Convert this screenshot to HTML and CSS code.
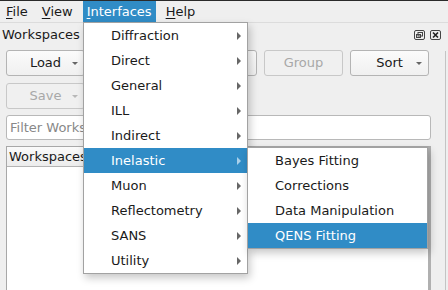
FILE: index.html
```html
<!DOCTYPE html>
<html lang="en">

<head>
    <meta charset="UTF-8">
    <title>Workspaces</title>
    <link rel="stylesheet" href="styles.css">
</head>

<body>
    <div class="window">
        <ul class="menubar">
            <li><u>F</u>ile</li>
            <li><u>V</u>iew</li>
            <li class="open"><u>I</u>nterfaces</li>
            <li><u>H</u>elp</li>
        </ul>

        <div class="dock">
            <div class="dock-title">
                <span>Workspaces</span>
                <span class="dock-btns">
                    <svg width="11" height="10" viewBox="0 0 11 10">
                        <rect x="0.5" y="0.5" width="10" height="9" rx="1.5" fill="none" stroke="#444"/>
                        <rect x="4" y="2.5" width="4.5" height="3.5" fill="none" stroke="#444"/>
                        <rect x="2.5" y="4.5" width="4" height="3" fill="none" stroke="#444"/>
                    </svg>
                    <svg width="11" height="10" viewBox="0 0 11 10">
                        <rect x="0.5" y="0.5" width="10" height="9" rx="1.5" fill="none" stroke="#444"/>
                        <path d="M3 2.5 L8 7.5 M8 2.5 L3 7.5" stroke="#222" stroke-width="1.6"/>
                    </svg>
                </span>
            </div>

            <div class="btn-row">
                <div class="btn">Load<i class="drop"></i></div>
                <!-- these two sit under the open menu -->
                <div class="btn"></div>
                <div class="btn"></div>
                <div class="btn disabled">Group</div>
                <div class="btn">Sort<i class="drop"></i></div>
            </div>
            <div class="btn-row">
                <div class="btn disabled">Save<i class="drop"></i></div>
            </div>

            <div class="filter">Filter Workspaces</div>

            <div class="tree">
                <div class="tree-head">Workspaces</div>
            </div>
        </div>
        <div class="side-line"></div>

        <!-- menus -->
        <ul class="menu main-menu">
            <li>Diffraction<i class="arrow"></i></li>
            <li>Direct<i class="arrow"></i></li>
            <li>General<i class="arrow"></i></li>
            <li>ILL<i class="arrow"></i></li>
            <li>Indirect<i class="arrow"></i></li>
            <li class="current">Inelastic<i class="arrow"></i></li>
            <li>Muon<i class="arrow"></i></li>
            <li>Reflectometry<i class="arrow"></i></li>
            <li>SANS<i class="arrow"></i></li>
            <li>Utility<i class="arrow"></i></li>
        </ul>
        <ul class="menu sub-menu">
            <li>Bayes Fitting</li>
            <li>Corrections</li>
            <li>Data Manipulation</li>
            <li class="current">QENS Fitting</li>
        </ul>
    </div>
</body>

</html>
```

FILE: styles.css
```css
html,
body,
ul,
li {
    margin: 0;
    padding: 0;
}

ul {
    list-style-type: none;
}

body {
    background: #efefef;
    font-family: "DejaVu Sans", sans-serif;
    font-size: 13px;
    color: #1a1a1a;
    overflow: hidden;
}

.window {
    position: relative;
    width: 448px;
    height: 290px;
    border-top: 1px solid #2a2a2a;
    box-sizing: border-box;
    overflow: hidden;
}

.menubar {
    display: flex;
    height: 21px;
    padding-left: 2px;
    gap: 6px;
    border-bottom: 1px solid #dcdcdc;
    background: #efefef;
}

.menubar li {
    padding: 0 4px;
    line-height: 21px;
}

.menubar li.open {
    background: #308cc6;
    color: #fff;
}

.menubar u {
    text-decoration-thickness: 1px;
    text-underline-offset: 2px;
}

.dock {
    padding: 0 17px 0 6px;
}

.dock-title {
    display: flex;
    justify-content: space-between;
    align-items: center;
    height: 22px;
    margin-left: -4px;
    margin-right: -10px;
}

.dock-btns {
    display: flex;
    gap: 5px;
    padding-top: 2px;
}

.btn-row {
    display: flex;
    gap: 7px;
    margin-top: 5px;
}

.btn-row + .btn-row {
    margin-top: 7px;
}

.btn {
    position: relative;
    width: 77px;
    height: 24px;
    line-height: 24px;
    text-align: center;
    border: 1px solid #b4b4b4;
    border-radius: 3px;
    background: linear-gradient(#fbfbfb, #f0f0f0);
    flex-shrink: 0;
}

.btn.disabled {
    color: #a8a8a8;
    border-color: #c8c8c8;
    background: #f0f0f0;
}

.drop {
    position: absolute;
    right: 6px;
    top: 11px;
    border-left: 3px solid transparent;
    border-right: 3px solid transparent;
    border-top: 3px solid #666;
}

.btn.disabled .drop {
    border-top-color: #b8b8b8;
}

.filter {
    margin-top: 6px;
    height: 23px;
    line-height: 23px;
    padding-left: 3px;
    color: #888;
    background: #fff;
    border: 1px solid #b8b8b8;
    border-radius: 3px;
}

.tree {
    margin-top: 6px;
    height: 160px;
    background: #fff;
    border: 1px solid #a8a8a8;
    border-right-width: 3px;
    border-right-color: #b0b0b0;
}

.tree-head {
    height: 19px;
    line-height: 19px;
    padding-left: 2px;
    background: linear-gradient(#fafafa, #ececec);
    border-bottom: 1px solid #b4b4b4;
}

.side-line {
    position: absolute;
    left: 445px;
    top: 50px;
    bottom: 0;
    border-left: 1px solid #c4c4c4;
}

.menu {
    position: absolute;
    background: #fff;
    border: 1px solid #a2a2a2;
    box-shadow: 2px 4px 8px rgba(0, 0, 0, 0.22);
}

.menu li {
    position: relative;
    height: 25px;
    line-height: 25px;
    padding-left: 27px;
}

.menu li.current {
    background: #308cc6;
    color: #fff;
}

.main-menu {
    left: 83px;
    top: 21px;
    width: 163px;
}

.sub-menu {
    left: 247px;
    top: 146px;
    width: 179px;
}

.arrow {
    position: absolute;
    right: 6px;
    top: 9px;
    border-top: 4px solid transparent;
    border-bottom: 4px solid transparent;
    border-left: 4px solid #666;
}

.current .arrow {
    border-left-color: #a9d0ea;
}
```
